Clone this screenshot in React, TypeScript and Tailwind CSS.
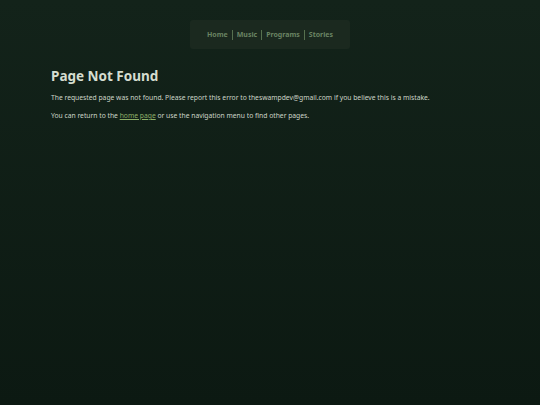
export default function App() {
  return (
    <div
      className="w-[540px] h-[405px] overflow-hidden bg-gradient-to-b from-[#13231a] to-[#0c1912] text-[#cdd5c8]"
      style={{ fontFamily: '"Noto Sans", "Open Sans", sans-serif' }}
    >
      <div className="flex justify-center pt-[20px]">
        <nav className="w-[160px] h-[29px] rounded-[3px] bg-[#1b291f] flex items-center justify-center text-[7px] font-bold text-[#6a8463]">
          <a className="leading-none">Home</a>
          <span className="mx-[4px] w-px h-[10px] bg-[#56704f]" />
          <a className="leading-none">Music</a>
          <span className="mx-[4px] w-px h-[10px] bg-[#56704f]" />
          <a className="leading-none">Programs</a>
          <span className="mx-[4px] w-px h-[10px] bg-[#56704f]" />
          <a className="leading-none">Stories</a>
        </nav>
      </div>
      <main className="px-[51px] pt-[18px]">
        <h1 className="text-[13.5px] font-bold text-[#d5ddd0] leading-[18px]">Page Not Found</h1>
        <p className="text-[6.75px] leading-[10px] mt-[8px]">
          The requested page was not found. Please report this error to theswampdev@gmail.com if you believe this is a mistake.
        </p>
        <p className="text-[6.75px] leading-[10px] mt-[8px]">
          You can return to the{" "}
          <a className="underline text-[#8daf67]">home page</a> or use the navigation menu to find other pages.
        </p>
      </main>
    </div>
  );
}
